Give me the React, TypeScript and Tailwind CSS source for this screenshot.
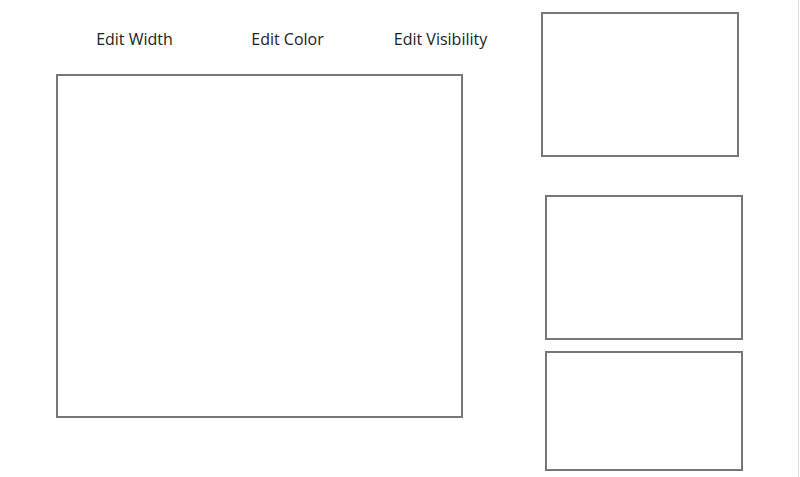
const tabs = ['Edit Width', 'Edit Color', 'Edit Visibility'];

export default function App() {
  return (
    <div className="flex h-[477px] w-[800px] overflow-hidden bg-white font-['Open_Sans',sans-serif] text-[#222]">
      <div className="ml-[56px] flex w-[407px] shrink-0 flex-col">
        <div className="ml-[2px] mt-[27px] flex h-[24px] items-center text-[16px] leading-[24px]">
          {tabs.map((t) => (
            <button key={t} className="w-[153px] shrink-0 text-center">
              {t}
            </button>
          ))}
        </div>
        <div className="mt-[23px] h-[344px] w-[407px] border-2 border-[#777]" />
      </div>
      <div className="ml-[78px] flex shrink-0 flex-col">
        <div className="mt-[12px] h-[145px] w-[198px] border-2 border-[#777]" />
        <div className="ml-[4px] mt-[38px] h-[145px] w-[198px] border-2 border-[#777]" />
        <div className="ml-[4px] mt-[11px] h-[120px] w-[198px] border-2 border-[#777]" />
      </div>
      <div className="flex-1" />
      <div className="mr-px w-px bg-[#e0e0e0]" />
    </div>
  );
}
